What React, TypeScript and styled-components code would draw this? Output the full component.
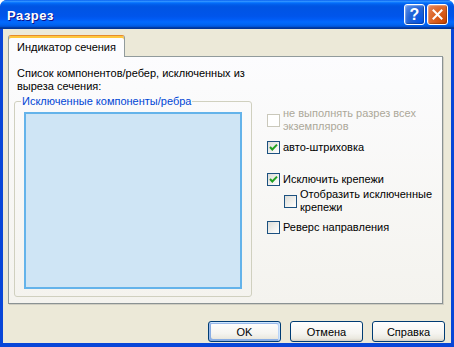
import React from 'react';
import styled, { createGlobalStyle } from 'styled-components';

const Global = createGlobalStyle`
  html, body { margin: 0; padding: 0; background: #ffffff; }
  body { font-family: "Liberation Sans", Arial, sans-serif; font-size: 11px; color: #000; }
`;

const Window = styled.div`
  width: 454px;
  height: 347px;
  box-sizing: border-box;
  display: flex;
  flex-direction: column;
  background: #0846D8;
  border-radius: 7px 7px 0 0;
  overflow: hidden;
`;

const TitleBar = styled.div`
  height: 29px;
  flex: none;
  display: flex;
  align-items: center;
  padding: 0 6px 0 7px;
  gap: 2px;
  background: linear-gradient(180deg, #0058ee 0%, #3593ff 4%, #288eff 6%, #127dff 8%, #036ffc 10%, #0262ee 14%, #0057e5 20%, #0054e3 24%, #0055eb 56%, #005bf5 66%, #026afe 76%, #0062ef 86%, #0052d6 92%, #0040ab 94%, #003092 100%);
`;

const Title = styled.div`
  flex: 1;
  color: #fff;
  font: bold 13px "Liberation Sans", Arial, sans-serif;
  letter-spacing: 0.5px;
  text-shadow: 1px 1px #0f1089;
  margin-top: 1px;
`;

const CaptionButton = styled.div<{ $kind: 'help' | 'close' }>`
  width: 21px;
  height: 21px;
  box-sizing: border-box;
  border: 1px solid #fff;
  border-radius: 3px;
  display: flex;
  align-items: center;
  justify-content: center;
  color: #fff;
  font: bold 16px "Liberation Sans", Arial, sans-serif;
  background: ${p =>
    p.$kind === 'close'
      ? 'radial-gradient(circle at 90% 90%, #cc4600 0%, #dc6527 55%, #e8885f 100%)'
      : 'radial-gradient(circle at 90% 90%, #0054e9 0%, #2263d5 55%, #6696eb 100%)'};
  box-shadow: inset -1px -1px 1px rgba(0, 0, 0, 0.25), inset 1px 1px 1px rgba(255, 255, 255, 0.3);
`;

const Client = styled.div`
  flex: 1;
  margin: 0 3px 4px 3px;
  background: #ece9d8;
  padding: 6px 8px 0 5px;
  display: flex;
  flex-direction: column;
`;

const TabStrip = styled.div`
  display: flex;
  height: 21px;
  position: relative;
  z-index: 1;
`;

const Tab = styled.div<{ $active?: boolean }>`
  height: 22px;
  box-sizing: border-box;
  padding: 5px 8px 0 8px;
  border: 1px solid #919b9c;
  border-bottom: none;
  border-top: 1px solid #e68b2c;
  border-radius: 3px 3px 0 0;
  background: ${p => (p.$active ? '#fcfcfe' : '#f4f3ee')};
  box-shadow: inset 0 2px #ffc73c;
  line-height: 13px;
  white-space: nowrap;
`;

const Pane = styled.div`
  height: 248px;
  box-sizing: border-box;
  border: 1px solid #919b9c;
  border-right-color: #8a9293;
  border-bottom-color: #8a9293;
  background: linear-gradient(180deg, #fcfcfe 0%, #f4f3ee 100%);
  box-shadow: 1px 1px 0 #d0cec2;
  display: grid;
  grid-template-columns: 238px 1fr;
  column-gap: 15px;
  padding: 10px 0 0 5px;
`;

const LeftColumn = styled.div`
  display: flex;
  flex-direction: column;
`;

const Description = styled.div`
  margin: 0 0 2px 3px;
  line-height: 13px;
`;

const GroupBox = styled.fieldset`
  margin: 0;
  padding: 0 9px 7px 9px;
  border: 1px solid #d0d0bf;
  border-radius: 3px;
  min-width: 0;
`;

const Legend = styled.legend`
  color: #0046d5;
  padding: 0 1px;
  margin-left: -3px;
  line-height: 13px;
`;

const ListBox = styled.div`
  margin-top: 4px;
  height: 177px;
  box-sizing: border-box;
  border: 2px solid #64b3ea;
  background: #cfe5f5;
`;

const RightColumn = styled.div`
  display: flex;
  flex-direction: column;
  padding-top: 40px;
`;

const CheckRow = styled.div<{ $top: number; $indent?: number; $disabled?: boolean }>`
  display: flex;
  align-items: center;
  gap: 3px;
  margin-top: ${p => p.$top}px;
  margin-left: ${p => p.$indent ?? 0}px;
  color: ${p => (p.$disabled ? '#aca899' : '#000')};
`;

const Box = styled.div<{ $disabled?: boolean }>`
  width: 13px;
  height: 13px;
  flex: none;
  box-sizing: border-box;
  border: 1px solid ${p => (p.$disabled ? '#cac8bb' : '#1c5180')};
  background: ${p => (p.$disabled ? '#ffffff' : 'linear-gradient(135deg, #dcdcd7 0%, #f2f2ef 60%, #ffffff 100%)')};
  display: flex;
  align-items: center;
  justify-content: center;
`;

const Label = styled.div`
  line-height: 13px;
  font-weight: normal;
`;

const ButtonRow = styled.div`
  display: flex;
  justify-content: flex-end;
  gap: 9px;
  margin: 17px -2px 0 0;
`;

const Button = styled.button<{ $default?: boolean }>`
  width: 73px;
  height: 21px;
  box-sizing: border-box;
  border: 1px solid #003c74;
  border-radius: 3px;
  padding: 0;
  font-family: "Liberation Sans", Arial, sans-serif;
  font-size: 11px;
  font-weight: normal;
  color: #000;
  background: linear-gradient(180deg, #ffffff 0%, #f5f4f0 60%, #ebe9e0 86%, #d6d0c5 100%);
  box-shadow: ${p =>
    p.$default
      ? 'inset -1px 1px #cee7ff, inset 1px 2px #98b8ea, inset -2px 2px #bcd4f6, inset 1px -1px #89ade4, inset 2px -2px #89ade4'
      : 'none'};
`;

const Check = () => (
  <svg width="9" height="9" viewBox="0 0 9 9">
    <path d="M1 4 L3.3 6.5 L8 1.6" fill="none" stroke="#21a121" strokeWidth="2" />
  </svg>
);

const CheckBox = ({ checked, disabled }: { checked?: boolean; disabled?: boolean }) => (
  <Box $disabled={disabled}>{checked && <Check />}</Box>
);

const CloseGlyph = () => (
  <svg width="11" height="11" viewBox="0 0 11 11">
    <path d="M1.5 1.5 L9.5 9.5 M9.5 1.5 L1.5 9.5" stroke="#fff" strokeWidth="2" strokeLinecap="square" />
  </svg>
);

export default function App() {
  return (
    <>
      <Global />
      <Window>
        <TitleBar>
          <Title>Разрез</Title>
          <CaptionButton $kind="help">?</CaptionButton>
          <CaptionButton $kind="close">
            <CloseGlyph />
          </CaptionButton>
        </TitleBar>
        <Client>
          <TabStrip>
            <Tab $active>Индикатор сечения</Tab>
          </TabStrip>
          <Pane>
            <LeftColumn>
              <Description>
                Список компонентов/ребер, исключенных из
                <br />
                выреза сечения:
              </Description>
              <GroupBox>
                <Legend>Исключенные компоненты/ребра</Legend>
                <ListBox />
              </GroupBox>
            </LeftColumn>
            <RightColumn>
              <CheckRow $top={0} $disabled>
                <CheckBox disabled />
                <Label>
                  не выполнять разрез всех
                  <br />
                  экземпляров
                </Label>
              </CheckRow>
              <CheckRow $top={8}>
                <CheckBox checked />
                <Label>авто-штриховка</Label>
              </CheckRow>
              <CheckRow $top={19}>
                <CheckBox checked />
                <Label>Исключить крепежи</Label>
              </CheckRow>
              <CheckRow $top={2} $indent={17}>
                <CheckBox />
                <Label>
                  Отобразить исключенные
                  <br />
                  крепежи
                </Label>
              </CheckRow>
              <CheckRow $top={7}>
                <CheckBox />
                <Label>Реверс направления</Label>
              </CheckRow>
            </RightColumn>
          </Pane>
          <ButtonRow>
            <Button $default>OK</Button>
            <Button>Отмена</Button>
            <Button>Справка</Button>
          </ButtonRow>
        </Client>
      </Window>
    </>
  );
}
